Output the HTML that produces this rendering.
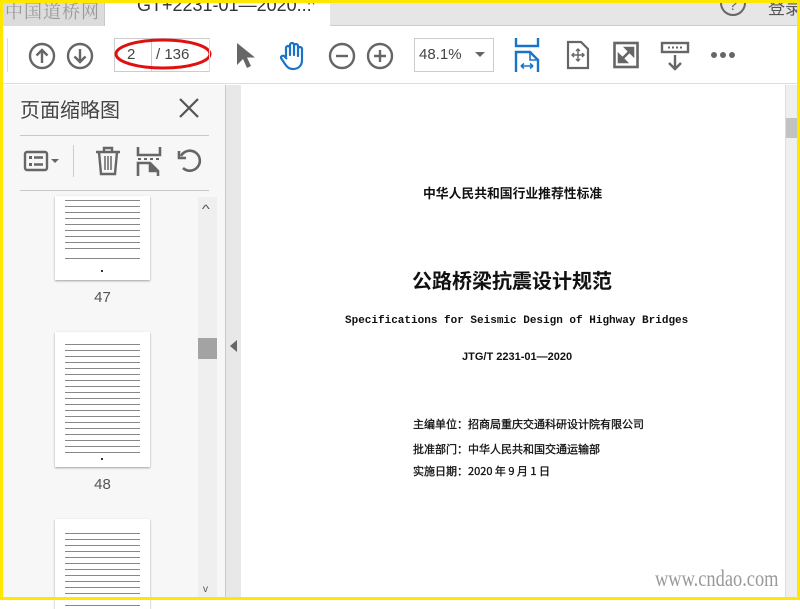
<!DOCTYPE html>
<html><head><meta charset="utf-8"><style>
*{margin:0;padding:0;box-sizing:border-box}
body{width:800px;height:600px;overflow:hidden;position:relative;background:#fff;font-family:"Liberation Sans","Noto Sans CJK SC",sans-serif}
.a{position:absolute;white-space:nowrap}
.yl{background:#ffe800;position:absolute}
.thumb{position:absolute;left:55px;width:95px;background:#fff;box-shadow:0 1px 2px rgba(0,0,0,.35);overflow:hidden}
.lines{position:absolute;left:10px;right:10px;background:repeating-linear-gradient(#fff 0 2px,#888 2px 3px,#fff 3px 6px)}
.doc{position:absolute;white-space:nowrap;font-family:"Noto Sans CJK SC",sans-serif;color:#111;font-weight:bold}
</style></head><body>
<!-- tab bar -->
<div class="a" style="left:0;top:0;width:800px;height:26px;background:#e6e6e6;border-bottom:1px solid #ccc"></div>
<div class="a" style="left:0;top:0;width:105px;height:26px;background:#dcdcdc;border-right:1px solid #c8c8c8"></div>
<div class="a" style="left:5px;top:0;font-size:18px;color:#999;font-family:'Noto Serif CJK SC',serif;letter-spacing:1px;line-height:22px">中国道桥网</div>
<div class="a" style="left:105px;top:0;width:225px;height:27px;background:#fff"></div>
<div class="a" style="left:137px;top:-6px;font-size:18px;color:#333;line-height:22px">GT+2231-01—2020...</div>
<div class="a" style="left:308px;top:-4px;font-size:14px;color:#444">^</div>
<div class="a" style="left:720px;top:-10px;width:26px;height:26px;border:2px solid #666;border-radius:50%;text-align:center;font-size:16px;color:#666;line-height:28px">?</div>
<div class="a" style="left:768px;top:-6px;font-size:17px;color:#555">登录</div>
<!-- toolbar -->
<div class="a" style="left:0;top:27px;width:800px;height:57px;background:#fff;border-bottom:1px solid #ddd"></div>
<div class="a" style="left:7px;top:38px;width:1px;height:34px;background:#ddd"></div>
<svg class="a" style="left:28px;top:42px" width="28" height="28" viewBox="0 0 28 28" fill="none" stroke="#666" stroke-width="2.4"><circle cx="14" cy="14" r="12"/><path d="M14 21V8M8.5 13.5L14 8l5.5 5.5"/></svg>
<svg class="a" style="left:66px;top:42px" width="28" height="28" viewBox="0 0 28 28" fill="none" stroke="#666" stroke-width="2.4"><circle cx="14" cy="14" r="12"/><path d="M14 7v13M8.5 14.5L14 20l5.5-5.5"/></svg>
<div class="a" style="left:114px;top:38px;width:96px;height:34px;border:1px solid #ccc"></div>
<div class="a" style="left:151px;top:38px;width:1px;height:34px;background:#ccc"></div>
<div class="a" style="left:127px;top:46px;font-size:15px;color:#444">2</div>
<div class="a" style="left:156px;top:46px;font-size:15px;color:#444">/ 136</div>
<svg class="a" style="left:112px;top:36px" width="100" height="36"><ellipse cx="51" cy="18" rx="47" ry="14" fill="none" stroke="#e01010" stroke-width="3"/></svg>
<div class="a" style="left:209px;top:38px;width:1px;height:34px;background:#ddd"></div>
<svg class="a" style="left:235px;top:41px" width="20" height="28" viewBox="0 0 20 28"><path d="M2 2v22l6-6 4 9 4-2-4-8.5h8z" fill="#666"/></svg>
<svg class="a" style="left:278px;top:40px" width="30" height="32" viewBox="0 0 30 32" fill="none" stroke="#1a73c9" stroke-width="2.2" stroke-linejoin="round"><path d="M8 17V8a2 2 0 014 0v7V5a2 2 0 014 0v10V6a2 2 0 014 0v10V9a2 2 0 014 0v11c0 6-4 9-9 9-4 0-6-2-8-5l-4-6a2 2 0 013-2l3 3"/></svg>
<svg class="a" style="left:328px;top:42px" width="28" height="28" viewBox="0 0 28 28" fill="none" stroke="#666" stroke-width="2.4"><circle cx="14" cy="14" r="12"/><path d="M8 14h12"/></svg>
<svg class="a" style="left:366px;top:42px" width="28" height="28" viewBox="0 0 28 28" fill="none" stroke="#666" stroke-width="2.4"><circle cx="14" cy="14" r="12"/><path d="M8 14h12M14 8v12"/></svg>
<div class="a" style="left:414px;top:38px;width:80px;height:34px;border:1px solid #ccc"></div>
<div class="a" style="left:419px;top:46px;font-size:15px;color:#444">48.1%</div>
<div class="a" style="left:475px;top:52px;width:0;height:0;border-left:5px solid transparent;border-right:5px solid transparent;border-top:5px solid #666"></div>
<svg class="a" style="left:514px;top:38px" width="28" height="34" viewBox="0 0 28 34" fill="none" stroke="#1a73c9" stroke-width="2.4"><path d="M2 0v8h22V0M2 34V14h14l8 8v12"/><path d="M16 14v8h8" stroke-width="1.6"/><path d="M7 28h12M7 28l3-2.5M7 28l3 2.5M19 28l-3-2.5M19 28l-3 2.5" stroke-width="1.6"/></svg>
<svg class="a" style="left:566px;top:40px" width="24" height="30" viewBox="0 0 24 30" fill="none" stroke="#666" stroke-width="2.2"><path d="M2 2h13l7 7v19H2z"/><path d="M12 9v12M6 15h12" stroke-width="1.4"/><path d="M10 11l2-2 2 2M10 19l2 2 2-2M8 13l-2 2 2 2M16 13l2 2-2 2" stroke-width="1.4"/></svg>
<svg class="a" style="left:613px;top:41px" width="26" height="28" viewBox="0 0 26 28"><rect x="1.5" y="2" width="23" height="24" fill="none" stroke="#666" stroke-width="2.6"/><path d="M13 7h7v7zM13 21H6v-7zM19 8l-12 12" fill="#666" stroke="#666" stroke-width="2.6"/></svg>
<svg class="a" style="left:660px;top:41px" width="30" height="30" viewBox="0 0 30 30" fill="none" stroke="#666" stroke-width="2.4"><rect x="2" y="2" width="26" height="9"/><path d="M8 6.5h2M12 6.5h2M16 6.5h2M20 6.5h2" stroke-width="2"/><path d="M15 14v14M9 22l6 6 6-6"/></svg>
<div class="a" style="left:711px;top:52px;font-size:0">
<span style="display:inline-block;width:6px;height:6px;border-radius:50%;background:#666;margin-right:3px"></span><span style="display:inline-block;width:6px;height:6px;border-radius:50%;background:#666;margin-right:3px"></span><span style="display:inline-block;width:6px;height:6px;border-radius:50%;background:#666"></span></div>
<!-- left panel -->
<div class="a" style="left:0;top:85px;width:226px;height:515px;background:#f7f7f7"></div>
<div class="a" style="left:20px;top:96px;font-size:20px;color:#444;font-family:'Noto Sans CJK SC',sans-serif;line-height:26px">页面缩略图</div>
<svg class="a" style="left:179px;top:98px" width="20" height="20" stroke="#555" stroke-width="2.2"><path d="M1 1l18 18M19 1L1 19"/></svg>
<div class="a" style="left:20px;top:135px;width:189px;height:1px;background:#c8c8c8"></div>
<svg class="a" style="left:23px;top:148px" width="38" height="26" viewBox="0 0 38 26"><rect x="2" y="4" width="22" height="18" rx="2" fill="none" stroke="#666" stroke-width="2.4"/><rect x="6" y="8" width="3" height="3" fill="#666"/><rect x="6" y="15" width="3" height="3" fill="#666"/><path d="M11 9.5h9M11 16.5h9" stroke="#666" stroke-width="2.4"/><path d="M28 11h8l-4 4z" fill="#666"/></svg>
<div class="a" style="left:73px;top:145px;width:1px;height:32px;background:#ccc"></div>
<svg class="a" style="left:94px;top:146px" width="28" height="30" viewBox="0 0 28 30" fill="none" stroke="#666" stroke-width="2.4"><path d="M2 6h24M10 6V2h8v4M5 6l2 22h14l2-22"/><path d="M11 10v14M14 10v14M17 10v14" stroke-width="1.5"/></svg>
<svg class="a" style="left:136px;top:146px" width="26" height="30" viewBox="0 0 26 30" fill="none" stroke="#666" stroke-width="2.6"><path d="M2 1v8h22V1"/><path d="M2 13h3M8 13h3M14 13h3M20 13h3" stroke-width="2"/><path d="M2 30V17h12l8 8v5"/><path d="M14 17v8h8" fill="#666"/></svg>
<svg class="a" style="left:176px;top:147px" width="28" height="28" viewBox="0 0 28 28" fill="none" stroke="#666" stroke-width="2.6"><path d="M7 21A10 10 0 1 0 5 9"/><path d="M3 4v7h7" fill="none"/></svg>
<div class="a" style="left:20px;top:190px;width:189px;height:1px;background:#c8c8c8"></div>
<!-- thumbs -->
<div class="thumb" style="top:196px;height:84px"><div class="lines" style="top:2px;height:54px"></div><div class="lines" style="top:60px;height:8px"></div><div class="a" style="left:46px;top:74px;width:2px;height:2px;background:#333"></div></div>
<div class="a" style="left:55px;top:289px;width:95px;text-align:center;font-size:15px;color:#555">47</div>
<div class="thumb" style="top:332px;height:135px"><div class="lines" style="top:10px;height:112px"></div><div class="a" style="left:46px;top:126px;width:2px;height:2px;background:#333"></div></div>
<div class="a" style="left:55px;top:476px;width:95px;text-align:center;font-size:15px;color:#555">48</div>
<div class="thumb" style="top:519px;height:90px"><div class="lines" style="top:12px;height:78px"></div></div>
<!-- thumb scrollbar -->
<div class="a" style="left:198px;top:197px;width:19px;height:403px;background:#efefef"></div>
<div class="a" style="left:203px;top:202px;font-size:12px;color:#555;transform:scaleX(1.4)">^</div>
<div class="a" style="left:198px;top:338px;width:19px;height:21px;background:#a3a3a3"></div>
<div class="a" style="left:203px;top:584px;font-size:10px;color:#555">v</div>
<!-- splitter -->
<div class="a" style="left:225px;top:85px;width:16px;height:515px;background:#e8e8e8;border-left:1px solid #c8c8c8"></div>
<div class="a" style="left:230px;top:340px;width:0;height:0;border-top:6px solid transparent;border-bottom:6px solid transparent;border-right:7px solid #666"></div>
<!-- document -->
<div class="doc" style="left:423px;top:183px;font-size:12.8px">中华人民共和国行业推荐性标准</div>
<div class="doc" style="left:412px;top:265px;font-size:20px">公路桥梁抗震设计规范</div>
<div class="a" style="left:345px;top:315px;font-size:11px;font-family:'Liberation Mono',monospace;font-weight:bold;color:#111">Specifications for Seismic Design of Highway Bridges</div>
<div class="a" style="left:462px;top:351px;font-size:11px;font-weight:bold;color:#111">JTG/T 2231-01—2020</div>
<div class="doc" style="left:413px;top:416px;font-size:11px;font-weight:normal;-webkit-text-stroke:.3px #111">主编单位：招商局重庆交通科研设计院有限公司</div>
<div class="doc" style="left:413px;top:441px;font-size:11px;font-weight:normal;-webkit-text-stroke:.3px #111">批准部门：中华人民共和国交通运输部</div>
<div class="doc" style="left:413px;top:463px;font-size:11px;font-weight:normal;-webkit-text-stroke:.3px #111">实施日期：2020 年 9 月 1 日</div>
<div class="a" style="left:655px;top:566px;font-size:23px;color:#999;font-family:'Liberation Serif',serif;transform:scaleX(.8);transform-origin:left">www.cndao.com</div>
<!-- right scrollbar -->
<div class="a" style="left:785px;top:85px;width:12px;height:515px;background:#efefef;border-left:1px solid #ddd"></div>
<div class="a" style="left:786px;top:118px;width:11px;height:20px;background:#c2c2c2"></div>
<!-- yellow frame -->
<div class="yl" style="left:0;top:0;width:800px;height:3px"></div>
<div class="yl" style="left:0;top:0;width:3px;height:600px"></div>
<div class="yl" style="left:797px;top:0;width:3px;height:600px"></div>
<div class="yl" style="left:0;top:597px;width:800px;height:3px"></div>
</body></html>
